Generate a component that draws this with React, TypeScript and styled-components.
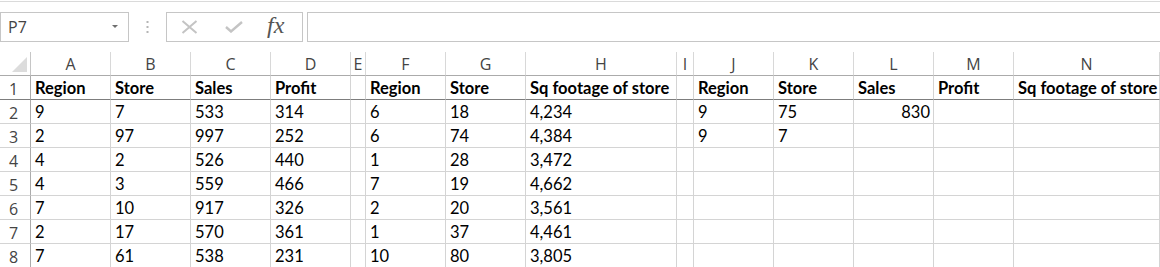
import React from "react";
import styled, { createGlobalStyle } from "styled-components";

const GlobalStyle = createGlobalStyle`
  body {
    margin: 0;
    background: #ffffff;
    font-family: "Lato", "Liberation Sans", sans-serif;
  }
`;

const COLUMNS = ["A", "B", "C", "D", "E", "F", "G", "H", "I", "J", "K", "L", "M", "N"];
const WIDTHS = [80, 80, 80, 80, 15, 80, 80, 151, 17, 80, 80, 80, 80];

type Value = string | { v: string; right: true };

const header: Value[] = [
  "Region", "Store", "Sales", "Profit", "",
  "Region", "Store", "Sq footage of store", "",
  "Region", "Store", "Sales", "Profit", "Sq footage of store",
];

const rows: Value[][] = [
  ["9", "7", "533", "314", "", "6", "18", "4,234", "", "9", "75", { v: "830", right: true }, "", ""],
  ["2", "97", "997", "252", "", "6", "74", "4,384", "", "9", "7", "", "", ""],
  ["4", "2", "526", "440", "", "1", "28", "3,472", "", "", "", "", "", ""],
  ["4", "3", "559", "466", "", "7", "19", "4,662", "", "", "", "", "", ""],
  ["7", "10", "917", "326", "", "2", "20", "3,561", "", "", "", "", "", ""],
  ["2", "17", "570", "361", "", "1", "37", "4,461", "", "", "", "", "", ""],
  ["7", "61", "538", "231", "", "10", "80", "3,805", "", "", "", "", "", ""],
];

const Page = styled.div`
  width: 1160px;
  height: 267px;
  overflow: hidden;
  border-top: 1px solid #dadada;
  margin-top: 1px;
`;

const FormulaBar = styled.div`
  display: flex;
  align-items: stretch;
  height: 30px;
  margin-top: 10px;
`;

const NameBox = styled.div`
  position: relative;
  box-sizing: border-box;
  width: 129px;
  border: 1px solid #c6c6c6;
  padding-left: 7px;
  display: flex;
  align-items: center;
  font-family: "Open Sans", "Liberation Sans", sans-serif;
  font-size: 16px;
  color: #444;
`;

const DropArrow = styled.span`
  position: absolute;
  right: 10px;
  top: 12px;
  width: 0;
  height: 0;
  border-left: 3px solid transparent;
  border-right: 3px solid transparent;
  border-top: 3px solid #6f6f6f;
`;

const Grip = styled.div`
  width: 37px;
  display: flex;
  align-items: center;
  justify-content: center;
`;

const FxBox = styled.div`
  box-sizing: border-box;
  width: 137px;
  border: 1px solid #c6c6c6;
  display: flex;
  align-items: center;
  padding-left: 14px;
  gap: 27px;
`;

const FxLabel = styled.span`
  font-family: "Liberation Serif", serif;
  font-style: italic;
  font-size: 24px;
  color: #555;
  margin-left: -3px;
  margin-top: -3px;
`;

const FormulaInput = styled.div`
  flex: 1;
  margin-left: 4px;
  border: 1px solid #c6c6c6;
  border-right: none;
`;

const Grid = styled.div`
  display: grid;
  grid-template-columns: 31px ${WIDTHS.map((w) => `${w}px`).join(" ")} 1fr;
  grid-auto-rows: 24px;
  margin-top: 10px;
`;

const Corner = styled.div`
  box-sizing: border-box;
  border-right: 1px solid #c6c6c6;
  border-bottom: 1px solid #ababab;
  display: flex;
  align-items: flex-end;
  justify-content: flex-end;
  padding: 0 3px 3px 0;
`;

const ColHeader = styled.div`
  box-sizing: border-box;
  border-right: 1px solid #d8d8d8;
  border-bottom: 1px solid #ababab;
  display: flex;
  align-items: center;
  justify-content: center;
  font-family: "Open Sans", "Liberation Sans", sans-serif;
  font-size: 16px;
  color: #444;
  padding-top: 1px;
`;

const RowHeader = styled.div<{ $frozen?: boolean }>`
  box-sizing: border-box;
  border-right: 1px solid #ababab;
  border-bottom: 1px solid ${(p) => (p.$frozen ? "#7d7d7d" : "#d4d4d4")};
  display: flex;
  align-items: center;
  justify-content: center;
  font-family: "Open Sans", "Liberation Sans", sans-serif;
  font-size: 16px;
  color: #444;
  padding: 2px 3px 0 0;
`;

const Cell = styled.div<{ $bold?: boolean; $right?: boolean; $frozen?: boolean }>`
  box-sizing: border-box;
  border-right: 1px solid #d4d4d4;
  border-bottom: 1px solid ${(p) => (p.$frozen ? "#7d7d7d" : "#d4d4d4")};
  display: flex;
  align-items: flex-end;
  justify-content: ${(p) => (p.$right ? "flex-end" : "flex-start")};
  padding: 0 3px 1px 4px;
  font-size: 16.5px;
  font-weight: ${(p) => (p.$bold ? 700 : 400)};
  color: #000;
  white-space: nowrap;
  overflow: hidden;
`;

const Grey = "#c4c4c4";

function CancelIcon() {
  return (
    <svg width="17" height="14" viewBox="0 0 17 14">
      <path d="M1.5 1 L15.5 13 M15.5 1 L1.5 13" stroke={Grey} strokeWidth="2" fill="none" />
    </svg>
  );
}

function EnterIcon() {
  return (
    <svg width="18" height="12" viewBox="0 0 18 12">
      <path d="M1 6 L6 10.5 L17 1" stroke={Grey} strokeWidth="2.4" fill="none" />
    </svg>
  );
}

function GripIcon() {
  return (
    <svg width="3" height="12" viewBox="0 0 3 12">
      <rect x="0.5" y="0" width="2" height="2" fill="#b5b5b5" />
      <rect x="0.5" y="5" width="2" height="2" fill="#b5b5b5" />
      <rect x="0.5" y="10" width="2" height="2" fill="#b5b5b5" />
    </svg>
  );
}

function SelectAll() {
  return (
    <svg width="15" height="15" viewBox="0 0 15 15">
      <polygon points="15,0 15,15 0,15" fill="#dcdcdc" />
    </svg>
  );
}

const text = (v: Value) => (typeof v === "string" ? v : v.v);
const isRight = (v: Value) => typeof v !== "string";

export default function App() {
  return (
    <Page>
      <GlobalStyle />
      <FormulaBar>
        <NameBox>
          P7
          <DropArrow />
        </NameBox>
        <Grip>
          <GripIcon />
        </Grip>
        <FxBox>
          <CancelIcon />
          <EnterIcon />
          <FxLabel>fx</FxLabel>
        </FxBox>
        <FormulaInput />
      </FormulaBar>
      <Grid>
        <Corner>
          <SelectAll />
        </Corner>
        {COLUMNS.map((c) => (
          <ColHeader key={c}>{c}</ColHeader>
        ))}
        <RowHeader $frozen>1</RowHeader>
        {header.map((h, i) => (
          <Cell key={`h${i}`} $bold $frozen>
            {h}
          </Cell>
        ))}
        {rows.map((row, r) => (
          <React.Fragment key={r}>
            <RowHeader>{r + 2}</RowHeader>
            {row.map((v, i) => (
              <Cell key={i} $right={isRight(v)}>
                {text(v)}
              </Cell>
            ))}
          </React.Fragment>
        ))}
      </Grid>
    </Page>
  );
}
